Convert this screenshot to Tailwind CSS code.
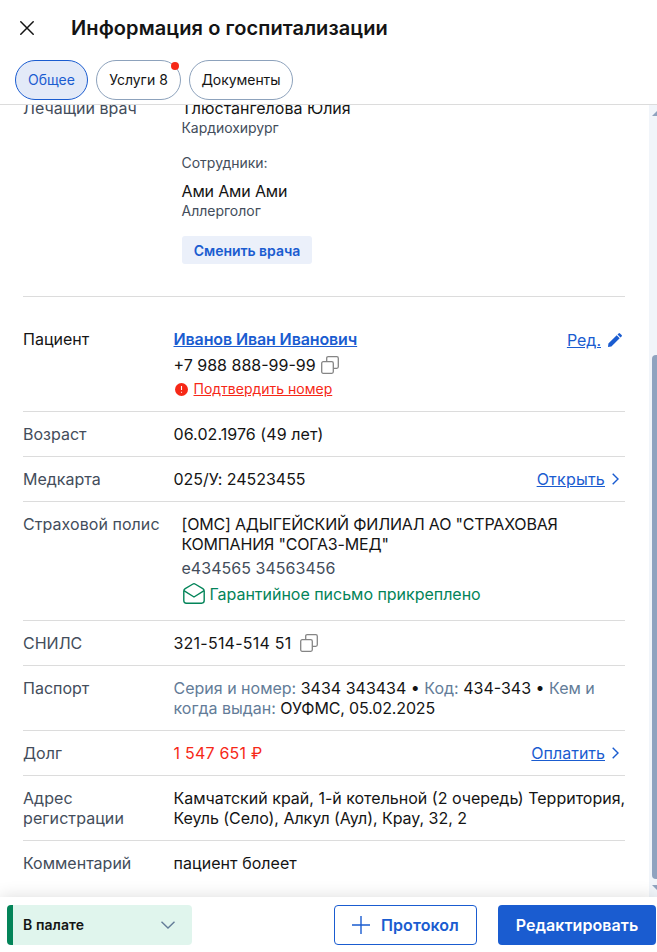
<!DOCTYPE html>
<html lang="ru">
<head>
<meta charset="utf-8">
<title>Информация о госпитализации</title>
<script src="https://cdn.jsdelivr.net/npm/@tailwindcss/browser@4"></script>
</head>
<body class="h-[952px] w-[657px] overflow-hidden bg-white font-['Inter',sans-serif] text-base leading-5 text-[#141414]">
<div class="flex h-full flex-col">
  <header class="h-[105px] shrink-0 border-b border-[#dcdcdc]">
    <div class="flex h-[60px] items-center pl-5">
      <svg class="-mt-[5px] size-[14px]" viewBox="0 0 14 14" fill="none" stroke="#141414" stroke-width="1.5" stroke-linecap="round"><path d="M.8.8l12.4 12.4M13.2.8L.8 13.2"/></svg>
      <h1 class="-mt-1 ml-[37px] text-xl leading-7 font-semibold tracking-[0.1px]">Информация о госпитализации</h1>
    </div>
    <nav class="flex gap-2 pl-[15px] text-sm">
      <button class="h-10 w-[73px] rounded-[20px] border border-[#1a5cd0] bg-[#e3eaf8] text-[#1a5cd0]">Общее</button>
      <button class="relative h-10 w-[85px] rounded-[20px] border border-[#8da2bc]">Услуги 8<span class="absolute top-[1px] right-[1px] size-2 rounded-full bg-[#f62817]"></span></button>
      <button class="h-10 w-[104px] rounded-[20px] border border-[#8da2bc] tracking-[-0.05px]">Документы</button>
    </nav>
  </header>

  <main class="flex min-h-0 flex-1 overflow-hidden">
    <div class="-mt-[7px] ml-[23px] w-[602px] shrink-0">
      <section class="flex h-[199px] border-b border-[#dcdcdc]">
        <div class="w-[158.500px] shrink-0 text-[#434d5b]">Лечащий врач</div>
        <div>
          <p>Тлюстангелова Юлия</p>
          <p class="text-sm tracking-[-0.05px] text-[#434d5b]">Кардиохирург</p>
          <p class="mt-[15px] text-sm text-[#434d5b]">Сотрудники:</p>
          <p class="mt-2 tracking-[-0.15px]">Ами Ами Ами</p>
          <p class="text-sm text-[#434d5b]">Аллерголог</p>
          <button class="mt-[15px] ml-[0.5px] h-7 w-[130px] rounded-[3px] bg-[#ebf0fa] pt-[2px] text-sm font-semibold tracking-[-0.03px] text-[#1a5cd0]">Сменить врача</button>
        </div>
      </section>

      <section class="flex h-[115px] border-b border-[#dcdcdc] pt-8">
        <div class="w-[150.500px] shrink-0">Пациент</div>
        <div class="flex-1">
          <a class="block font-semibold tracking-[-0.12px] text-[#1a5cd0] underline">Иванов Иван Иванович</a>
          <div class="mt-1.5 flex items-center gap-[5px]">+7 988 888-99-99
            <svg class="size-[18px]" viewBox="0 0 18 18" fill="none" stroke="#858585" stroke-width="1.3"><rect x=".7" y="5.7" width="11.6" height="11.6" rx="1.5"/><path d="M5.7 5.7V2.2Q5.7.7 7.2.7h8.6q1.5 0 1.5 1.5v8.6q0 1.5-1.5 1.5h-3.5"/></svg>
          </div>
          <div class="mt-1 flex items-center gap-[6px] pl-[1px] text-sm text-[#f62817]">
            <svg class="size-[13px]" viewBox="0 0 13 13"><circle cx="6.5" cy="6.5" r="6.5" fill="#f62817"/><path d="M6.5 3v4M6.5 8.7v1.1" stroke="#fff" stroke-width="1.1"/></svg>
            <a class="underline">Подтвердить номер</a>
          </div>
        </div>
        <div class="flex h-[22px] items-center gap-[7px] pr-[3px] text-[#1a5cd0]"><a class="underline">Ред.</a>
          <svg class="size-[14px]" viewBox="0 0 14 14" fill="#1a5cd0"><path d="M0 14l.4-3.4L8.7 2.3l3 3L3.4 13.6zM9.5 1.5L10.6.4q.7-.7 1.4 0L13.6 2q.7.7 0 1.4l-1.1 1.1z"/></svg>
        </div>
      </section>

      <section class="flex border-b border-[#dcdcdc] py-3">
        <div class="w-[150.500px] shrink-0 text-[#434d5b]">Возраст</div><div class="tracking-[0.07px]">06.02.1976 (49 лет)</div>
      </section>

      <section class="flex border-b border-[#dcdcdc] py-3">
        <div class="w-[150.500px] shrink-0 text-[#434d5b]">Медкарта</div><div class="flex-1 tracking-[-0.03px]">025/У: 24523455</div>
        <div class="flex items-center gap-[7px] pr-[6px] text-[#1a5cd0]"><a class="tracking-[0.22px] underline">Открыть</a>
          <svg class="h-3 w-[7px]" viewBox="0 0 7 12" fill="none" stroke="#1a5cd0" stroke-width="1.4"><path d="M.7.7L6 6 .7 11.3"/></svg>
        </div>
      </section>

      <section class="flex h-[119px] border-b border-[#dcdcdc] pt-3">
        <div class="w-[158.500px] shrink-0 tracking-[0.06px] text-[#434d5b]">Страховой полис</div>
        <div>
          <p class="tracking-[-0.18px]">[ОМС] АДЫГЕЙСКИЙ ФИЛИАЛ АО "СТРАХОВАЯ<br>КОМПАНИЯ "СОГАЗ-МЕД"</p>
          <p class="mt-1 tracking-[0.03px] text-[#434d5b]">е434565 34563456</p>
          <div class="mt-1.5 flex items-center gap-[5px] pl-[1px] text-[#038459]">
            <svg class="-mt-[2px] h-[21px] w-[22px]" viewBox="0 0 22 21" fill="none" stroke="#038459" stroke-width="1.4" stroke-linejoin="round"><path d="M.8 8.2Q.8 6.5 2.2 5.6L10 1q1-.6 2 0l7.8 4.6q1.4.9 1.4 2.6v9.4q0 2.6-2.6 2.6H3.4Q.8 20.2.8 17.6z"/><path d="M.9 7.7L11 14l10.1-6.3"/></svg>
            <span class="tracking-[-0.02px]">Гарантийное письмо прикреплено</span>
          </div>
        </div>
      </section>

      <section class="flex border-b border-[#dcdcdc] py-3">
        <div class="w-[150.500px] shrink-0 text-[#434d5b]">СНИЛС</div>
        <div class="flex items-center gap-[9px]"><span class="tracking-[0.23px]">321-514-514 51</span>
          <svg class="size-[18px]" viewBox="0 0 18 18" fill="none" stroke="#858585" stroke-width="1.3"><rect x=".7" y="5.7" width="11.6" height="11.6" rx="1.5"/><path d="M5.7 5.7V2.2Q5.7.7 7.2.7h8.6q1.5 0 1.5 1.5v8.6q0 1.5-1.5 1.5h-3.5"/></svg>
        </div>
      </section>

      <section class="flex border-b border-[#dcdcdc] py-3">
        <div class="w-[150.500px] shrink-0 text-[#434d5b]">Паспорт</div>
        <div class="whitespace-nowrap"><span class="text-[#637c98]">Серия и номер:</span> 3434 343434 • <span class="text-[#637c98]">Код:</span> 434-343 • <span class="text-[#637c98]">Кем и<br>когда выдан:</span> <span class="tracking-[-0.14px]">ОУФМС, 05.02.2025</span></div>
      </section>

      <section class="flex border-b border-[#dcdcdc] py-3">
        <div class="w-[150.500px] shrink-0 text-[#434d5b]">Долг</div><div class="flex-1 tracking-[0.22px] text-[#f62817]">1 547 651 ₽</div>
        <div class="flex items-center gap-[7px] pr-[6px] text-[#1a5cd0]"><a class="underline">Оплатить</a>
          <svg class="h-3 w-[7px]" viewBox="0 0 7 12" fill="none" stroke="#1a5cd0" stroke-width="1.4"><path d="M.7.7L6 6 .7 11.3"/></svg>
        </div>
      </section>

      <section class="flex border-b border-[#dcdcdc] py-3">
        <div class="w-[150.500px] shrink-0 tracking-[0.08px] text-[#434d5b]">Адрес<br>регистрации</div>
        <div class="whitespace-nowrap">Камчатский край, 1-й котельной (2 очередь) Территория,<br><span class="tracking-[-0.04px]">Кеуль (Село), Алкул (Аул), Крау, 32, 2</span></div>
      </section>

      <section class="flex py-3">
        <div class="w-[150.500px] shrink-0 text-[#434d5b]">Комментарий</div><div class="tracking-[0.06px]">пациент болеет</div>
      </section>
    </div>

    <div class="ml-6 flex w-2 shrink-0 flex-col overflow-hidden bg-[#f1f5fa] pl-[3px]">
      <svg class="mt-[6px] h-[5px] w-[10px] shrink-0" viewBox="0 0 10 5" fill="#8fa3bf"><path d="M0 5l5-5 5 5z"/></svg>
      <div class="mt-[239px] h-[524px] w-[10px] shrink-0 rounded-[4px] bg-[#8fa3bf]"></div>
      <svg class="mt-[6px] h-[5px] w-[10px] shrink-0" viewBox="0 0 10 5" fill="#8fa3bf"><path d="M0 0l5 5 5-5z"/></svg>
    </div>
  </main>

  <footer class="relative flex h-[55px] shrink-0 bg-white pt-2 pl-[7px] shadow-[0_0_16px_rgba(0,0,0,0.14)]">
    <div class="flex h-10 w-[185px] items-center justify-between rounded-[4px] border-l-[6px] border-[#038459] bg-[#e0f5ed] pr-[17px] pl-[10px] text-sm font-semibold"><span class="tracking-[0.08px]">В палате</span>
      <svg class="h-2 w-[14px]" viewBox="0 0 14 8" fill="none" stroke="#637c98" stroke-width="1.4"><path d="M.5.7L7 7 13.5.7"/></svg>
    </div>
    <button class="ml-[142px] flex h-10 w-[143px] items-center rounded-[4px] border border-[#1a5cd0] pl-[17px] font-semibold tracking-[0.1px] text-[#1a5cd0]">
      <svg class="mr-[11px] size-[18px]" viewBox="0 0 18 18" fill="none" stroke="#1a5cd0" stroke-width="1.4"><path d="M9 0v18M0 9h18"/></svg>Протокол
    </button>
    <button class="ml-[21px] h-10 w-[158px] rounded-[4px] bg-[#1a5cd0] font-semibold tracking-[0.06px] text-white">Редактировать</button>
  </footer>
</div>
</body>
</html>
